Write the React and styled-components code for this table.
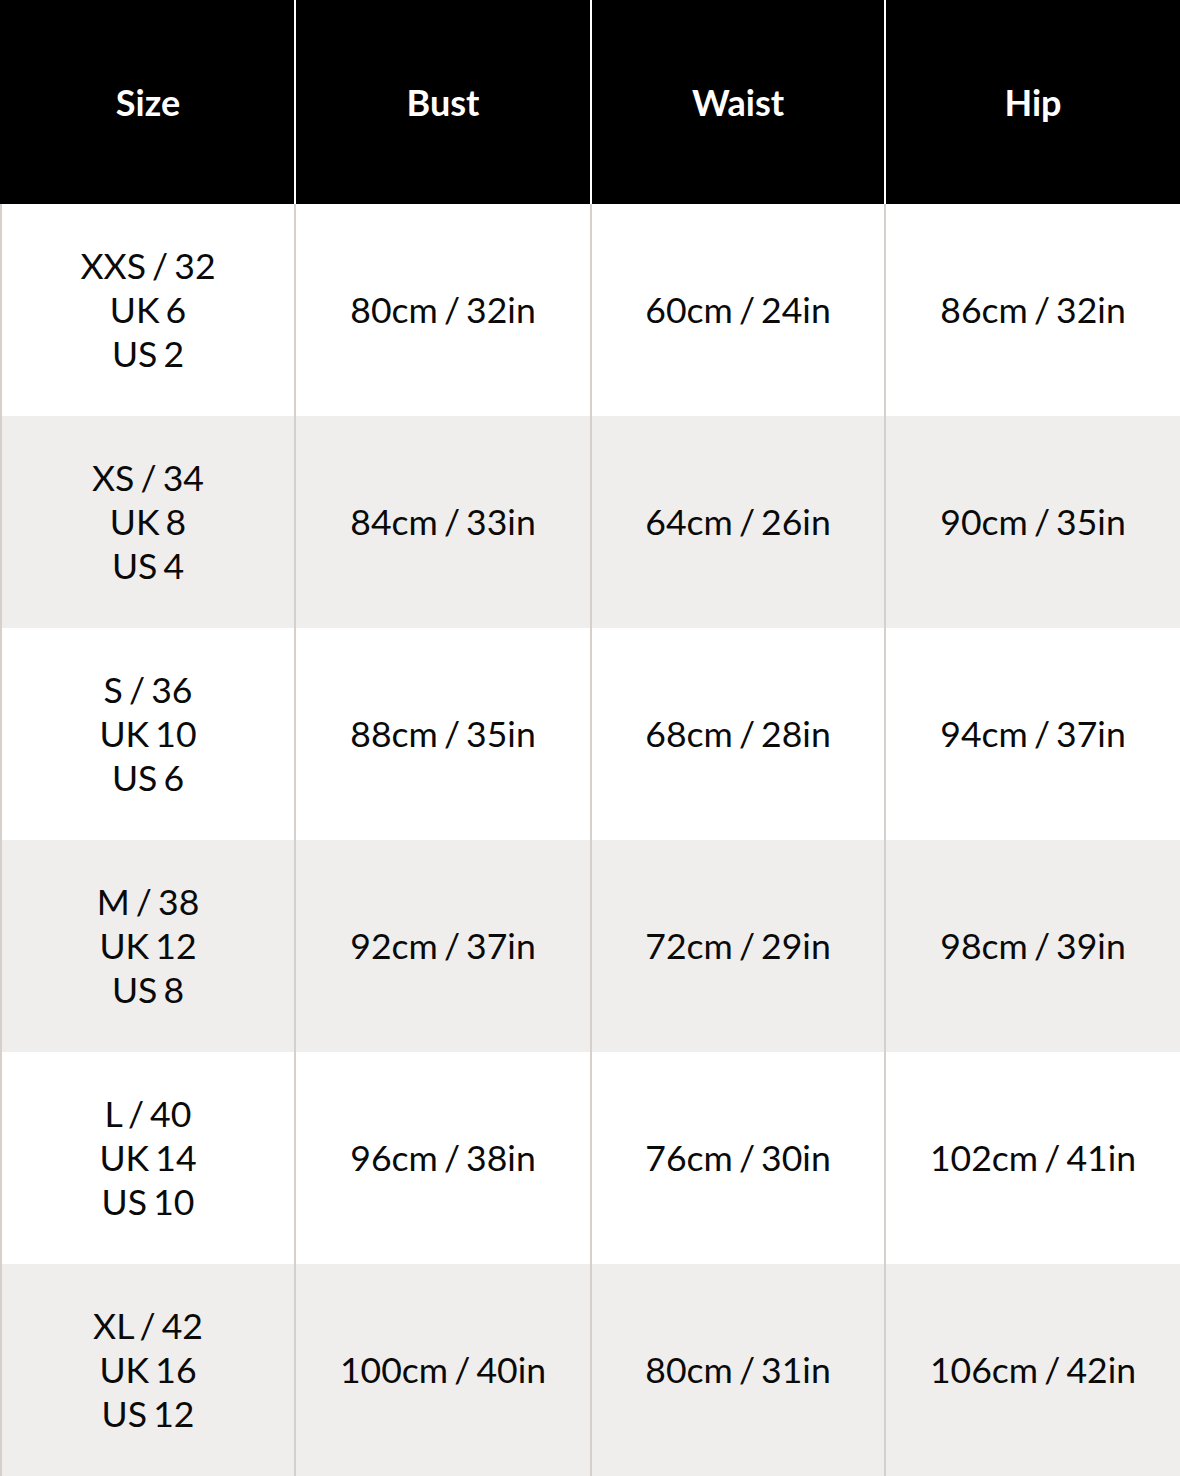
import React from "react";
import styled, { createGlobalStyle } from "styled-components";

const GlobalStyle = createGlobalStyle`
  body {
    margin: 0;
    background: #ffffff;
    font-family: "Lato", "Liberation Sans", sans-serif;
  }
`;

const COLS = "294px 296px 294px 296px";

const sizes = [
  { size: ["XXS / 32", "UK 6", "US 2"], bust: "80cm / 32in", waist: "60cm / 24in", hip: "86cm / 32in" },
  { size: ["XS / 34", "UK 8", "US 4"], bust: "84cm / 33in", waist: "64cm / 26in", hip: "90cm / 35in" },
  { size: ["S / 36", "UK 10", "US 6"], bust: "88cm / 35in", waist: "68cm / 28in", hip: "94cm / 37in" },
  { size: ["M / 38", "UK 12", "US 8"], bust: "92cm / 37in", waist: "72cm / 29in", hip: "98cm / 39in" },
  { size: ["L / 40", "UK 14", "US 10"], bust: "96cm / 38in", waist: "76cm / 30in", hip: "102cm / 41in" },
  { size: ["XL / 42", "UK 16", "US 12"], bust: "100cm / 40in", waist: "80cm / 31in", hip: "106cm / 42in" },
];

const App = () => {
  return (
    <>
      <GlobalStyle />
      <Chart>
        <HeadRow>
          {["Size", "Bust", "Waist", "Hip"].map((h, i) => (
            <HeadCell key={h} first={i === 0}>
              {h}
            </HeadCell>
          ))}
        </HeadRow>
        {sizes.map((row, ind) => (
          <BodyRow key={row.bust} shaded={ind % 2 === 1}>
            <Cell>
              <Lines>
                {row.size.map((s) => (
                  <span key={s}>{s}</span>
                ))}
              </Lines>
            </Cell>
            <Cell>{row.bust}</Cell>
            <Cell>{row.waist}</Cell>
            <Cell>{row.hip}</Cell>
          </BodyRow>
        ))}
      </Chart>
    </>
  );
};

const Chart = styled.div`
  width: 1180px;
  display: flex;
  flex-direction: column;
`;

const HeadRow = styled.div`
  display: grid;
  grid-template-columns: ${COLS};
  height: 204px;
  background: #000000;
`;

const HeadCell = styled.div`
  display: flex;
  align-items: center;
  justify-content: center;
  border-left: 2px solid ${(p) => (p.first ? "#000000" : "#ffffff")};
  color: #ffffff;
  font-weight: 700;
  font-size: 36px;
  line-height: 44px;
`;

const BodyRow = styled.div`
  display: grid;
  grid-template-columns: ${COLS};
  height: 212px;
  background: ${(p) => (p.shaded ? "#efeeec" : "#ffffff")};
`;

const Cell = styled.div`
  display: flex;
  align-items: center;
  justify-content: center;
  border-left: 2px solid #d6d0cd;
  color: #0a0a0a;
  font-size: 35.6px;
  line-height: 44px;
  word-spacing: -3px;
  text-align: center;
`;

const Lines = styled.div`
  display: flex;
  flex-direction: column;
  align-items: center;
`;

export default App;
